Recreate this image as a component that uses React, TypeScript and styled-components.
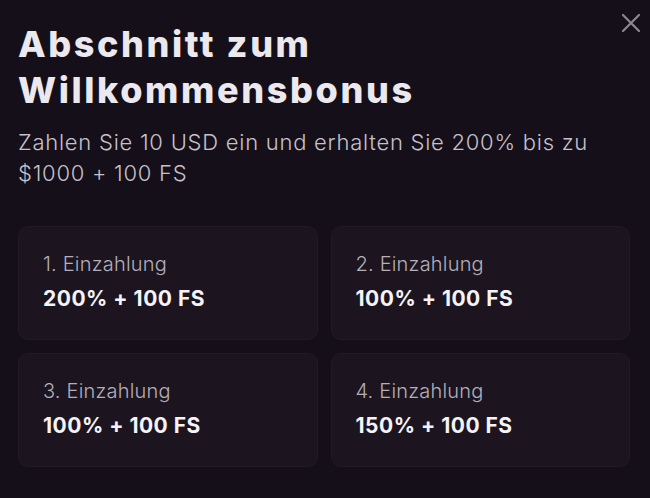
import styled, { createGlobalStyle } from "styled-components";

const GlobalStyle = createGlobalStyle`
  html, body {
    margin: 0;
    padding: 0;
    background: #150f19;
  }
  * { box-sizing: border-box; }
`;

const Modal = styled.div`
  position: relative;
  width: 650px;
  height: 498px;
  background: #150f19;
  padding: 21px 20px 0 18px;
  font-family: Inter, "Noto Sans", sans-serif;
  color: #ece9ee;
`;

const CloseButton = styled.button`
  position: absolute;
  top: 11px;
  right: 7px;
  width: 24px;
  height: 24px;
  padding: 0;
  border: none;
  background: transparent;
  color: #8c8792;
  cursor: pointer;
  display: flex;
  align-items: center;
  justify-content: center;
`;

const Title = styled.h1`
  margin: 0;
  font-size: 36px;
  line-height: 46px;
  font-weight: 800;
  letter-spacing: 2.6px;
  color: #ebe8ee;
`;

const Subtitle = styled.p`
  margin: 14px 0 0;
  font-size: 22px;
  line-height: 31px;
  font-weight: 300;
  letter-spacing: 0.75px;
  color: #c6c1cb;
`;

const Grid = styled.div`
  margin-top: 37px;
  display: grid;
  grid-template-columns: 1fr 1fr;
  gap: 13px;
  width: 612px;
`;

const Card = styled.div`
  height: 114px;
  border-radius: 10px;
  background: #1c1520;
  border: 1px solid #221a26;
  padding: 24px 24px;
  display: flex;
  flex-direction: column;
  gap: 9px;
`;

const Label = styled.div`
  font-size: 20px;
  line-height: 26px;
  font-weight: 300;
  letter-spacing: 0.2px;
  color: #b4afb9;
`;

const Value = styled.div`
  font-size: 21px;
  line-height: 26px;
  font-weight: 700;
  letter-spacing: 0.5px;
  color: #f5f3f6;
`;

const deposits = [
  { label: "1. Einzahlung", value: "200% + 100 FS" },
  { label: "2. Einzahlung", value: "100% + 100 FS" },
  { label: "3. Einzahlung", value: "100% + 100 FS" },
  { label: "4. Einzahlung", value: "150% + 100 FS" },
];

export default function App() {
  return (
    <>
      <GlobalStyle />
      <Modal>
        <CloseButton aria-label="Schließen">
          <svg width="20" height="20" viewBox="0 0 20 20" fill="none">
            <path d="M2 2L18 18M18 2L2 18" stroke="currentColor" strokeWidth="2.2" strokeLinecap="round" />
          </svg>
        </CloseButton>
        <Title>
          Abschnitt zum
          <br />
          Willkommensbonus
        </Title>
        <Subtitle>Zahlen Sie 10 USD ein und erhalten Sie 200% bis zu $1000 + 100 FS</Subtitle>
        <Grid>
          {deposits.map((d) => (
            <Card key={d.label}>
              <Label>{d.label}</Label>
              <Value>{d.value}</Value>
            </Card>
          ))}
        </Grid>
      </Modal>
    </>
  );
}
